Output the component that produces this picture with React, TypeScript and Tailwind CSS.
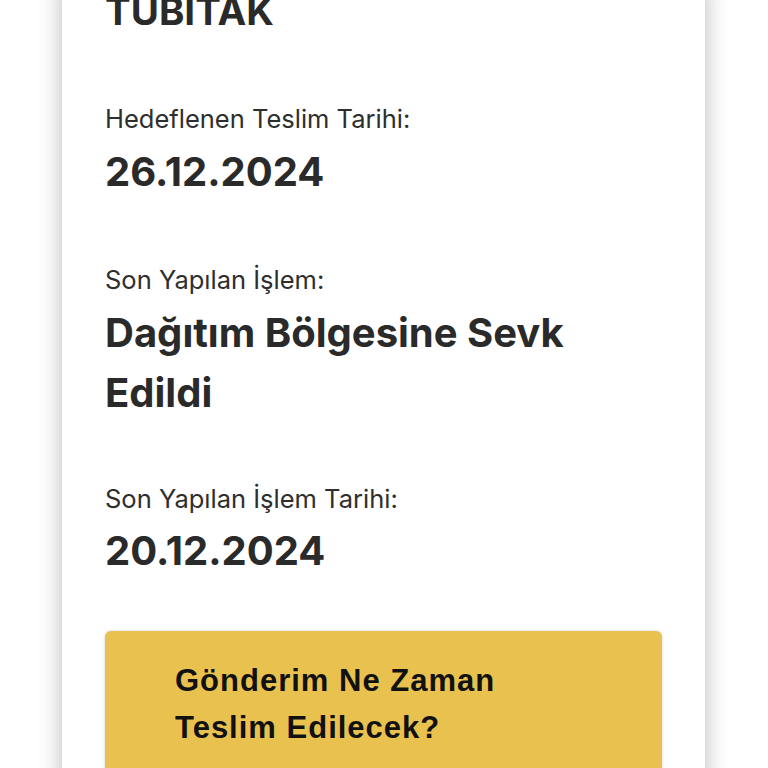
import React from "react";

function Field({ label, value }: { label: string; value: React.ReactNode }) {
  return (
    <div className="mb-[60px]">
      <div className="text-[25.5px] leading-[36px] text-[#2e2e2e]">{label}</div>
      <div className="mt-[5px] text-[40px] leading-[60px] font-bold text-[#2a2a2a]">{value}</div>
    </div>
  );
}

export default function App() {
  return (
    <div
      className="h-[768px] w-[768px] overflow-hidden bg-white"
      style={{ fontFamily: "Inter, 'Noto Sans', sans-serif" }}
    >
      <div className="ml-[62px] w-[643px] bg-white shadow-[0_0_22px_rgba(0,0,0,0.28)] px-[43px] -mt-[16px] pb-10">
        <div className="text-[38.5px] leading-[54px] font-bold text-[#2a2a2a] mb-[63px] -mt-[9px]">TÜBİTAK</div>
        <Field label="Hedeflenen Teslim Tarihi:" value="26.12.2024" />
        <Field label="Son Yapılan İşlem:" value={<>Dağıtım Bölgesine Sevk<br />Edildi</>} />
        <div className="-mt-[2px]">
          <div className="text-[25.5px] leading-[36px] text-[#2e2e2e]">Son Yapılan İşlem Tarihi:</div>
          <div className="mt-[4px] text-[40px] leading-[60px] font-bold text-[#2a2a2a]">20.12.2024</div>
        </div>
        <button className="mt-[50px] w-full text-left rounded-[6px] bg-[#e8c14f] shadow-[0_0_3px_rgba(0,0,0,0.2)] pl-[70px] pr-6 pt-[26px] pb-[30px]">
          <span
            className="block text-[31px] leading-[47px] font-bold tracking-[1px] text-[#111111]"
            style={{ fontFamily: "'Liberation Sans', Arial, sans-serif" }}
          >
            Gönderim Ne Zaman
            <br />
            Teslim Edilecek?
          </span>
        </button>
      </div>
    </div>
  );
}
